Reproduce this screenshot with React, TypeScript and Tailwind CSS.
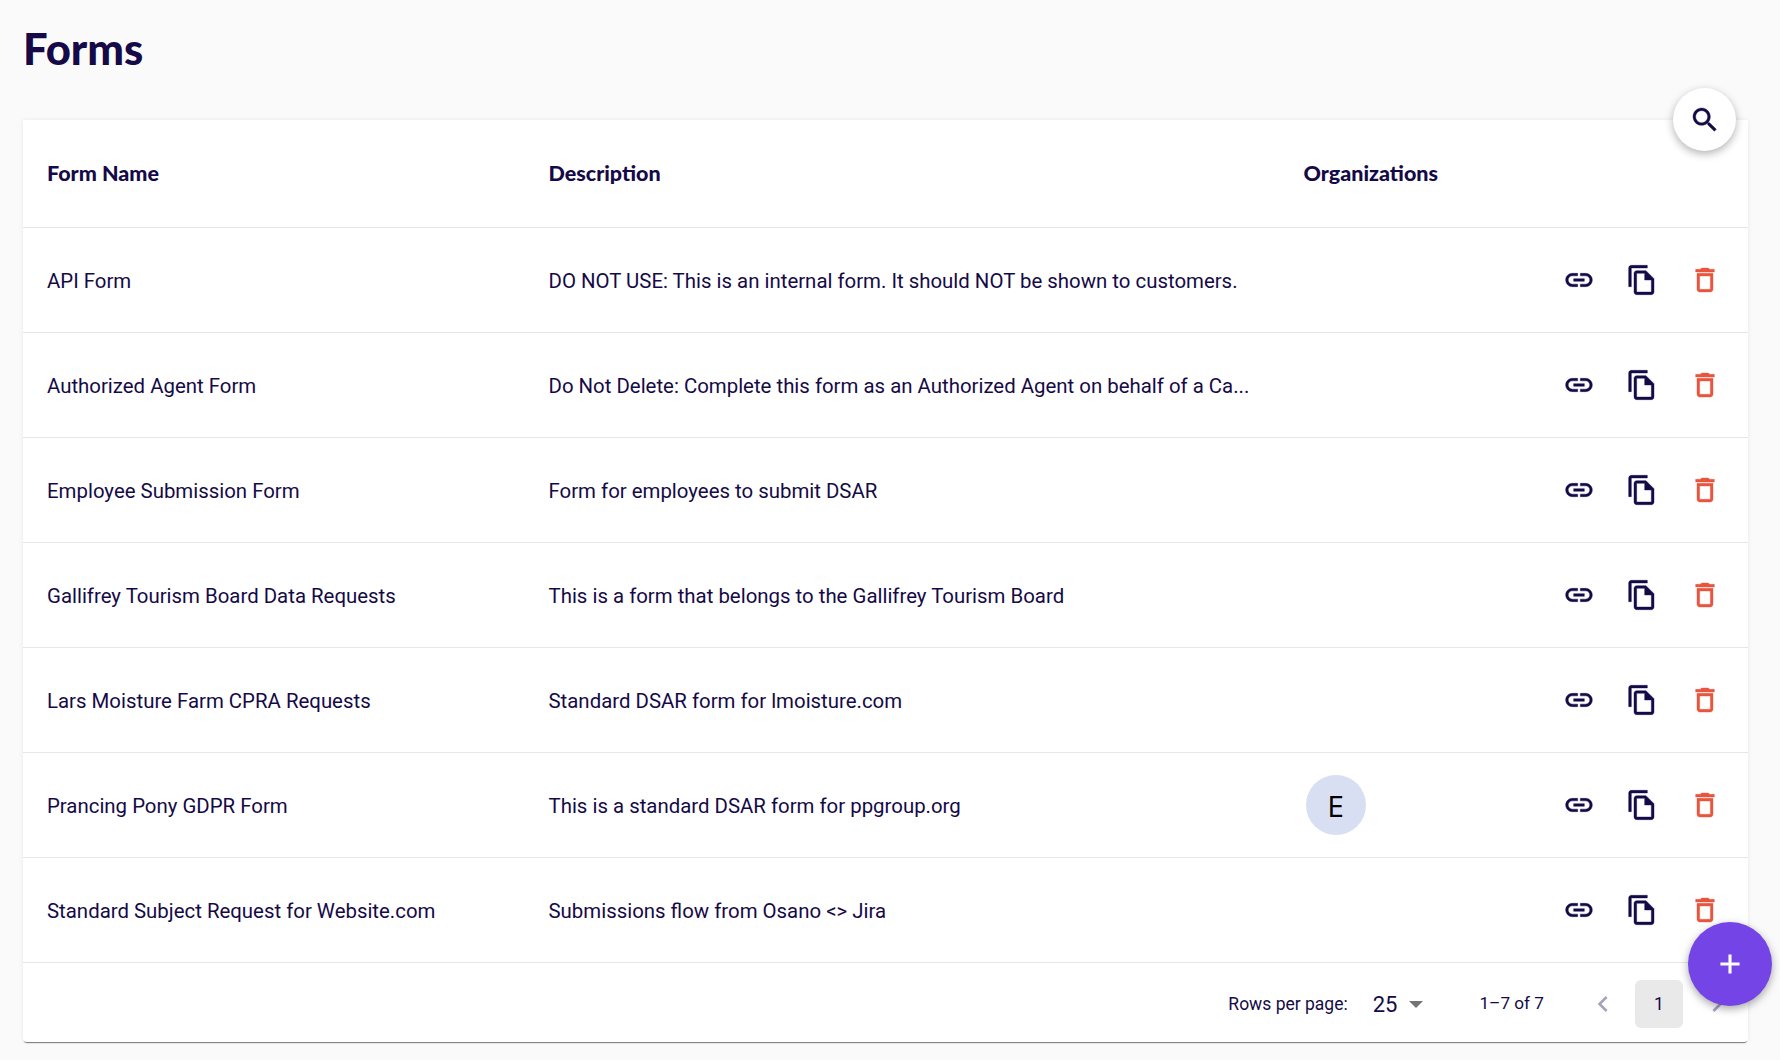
const forms = [
  { name: 'API Form', description: 'DO NOT USE: This is an internal form. It should NOT be shown to customers.' },
  { name: 'Authorized Agent Form', description: 'Do Not Delete: Complete this form as an Authorized Agent on behalf of a Ca...' },
  { name: 'Employee Submission Form', description: 'Form for employees to submit DSAR' },
  { name: 'Gallifrey Tourism Board Data Requests', description: 'This is a form that belongs to the Gallifrey Tourism Board' },
  { name: 'Lars Moisture Farm CPRA Requests', description: 'Standard DSAR form for lmoisture.com' },
  { name: 'Prancing Pony GDPR Form', description: 'This is a standard DSAR form for ppgroup.org', org: 'E' },
  { name: 'Standard Subject Request for Website.com', description: 'Submissions flow from Osano <> Jira' },
]

function Icon({ d, className }: { d: string; className?: string }) {
  return (
    <svg viewBox="0 0 24 24" fill="currentColor" stroke="currentColor" strokeWidth="0.3" className={className}>
      <path d={d} />
    </svg>
  )
}

const LINK = 'M3.9 12c0-1.71 1.39-3.1 3.1-3.1h4V7H7c-2.76 0-5 2.24-5 5s2.24 5 5 5h4v-1.9H7c-1.71 0-3.1-1.39-3.1-3.1zM8 13h8v-2H8v2zm9-6h-4v1.9h4c1.71 0 3.1 1.39 3.1 3.1s-1.39 3.1-3.1 3.1h-4V17h4c2.76 0 5-2.24 5-5s-2.24-5-5-5z'
const COPY = 'M16 1H4c-1.1 0-2 .9-2 2v14h2V3h12V1zm-1 4H8c-1.1 0-1.99.9-1.99 2L6 21c0 1.1.89 2 1.99 2H19c1.1 0 2-.9 2-2V11l-6-6zM8 21V7h6v5h5v9H8z'
const TRASH = 'M6 19c0 1.1.9 2 2 2h8c1.1 0 2-.9 2-2V7H6v12zM8 9h8v10H8V9zm7.5-5l-1-1h-5l-1 1H5v2h14V4h-3.5z'
const SEARCH = 'M15.5 14h-.79l-.28-.27C15.41 12.59 16 11.11 16 9.5 16 5.91 13.09 3 9.5 3S3 5.91 3 9.5 5.91 16 9.5 16c1.61 0 3.09-.59 4.23-1.57l.27.28v.79l5 4.99L20.49 19l-4.99-5zm-6 0C7.01 14 5 11.99 5 9.5S7.01 5 9.5 5 14 7.01 14 9.5 11.99 14 9.5 14z'
const PLUS = 'M19 13h-6v6h-2v-6H5v-2h6V5h2v6h6v2z'

export default function App() {
  return (
    <div className="h-[1060px] bg-[#fafafa] pl-[23px] pr-[32px] font-['Roboto',sans-serif] text-[#150a47] overflow-hidden">
      <h1 className="h-[120px] pt-[17px] font-['Lato',sans-serif] text-[43.6px] leading-[62px] font-black">Forms</h1>

      <div className="relative h-[922px] bg-white rounded-b-[4px] shadow-[0_2px_1px_-1px_rgba(0,0,0,0.5),0_0_4px_rgba(0,0,0,0.08)] flex flex-col">
        <button className="absolute right-[12px] top-[-32px] w-[63px] h-[63px] rounded-full bg-white shadow-[0_3px_8px_rgba(0,0,0,0.3)] flex items-center justify-center">
          <Icon d={SEARCH} className="w-[32px] h-[32px]" />
        </button>

        <div className="flex items-center h-[108px] pb-[1px] border-b border-[#e6e6e6] font-['Lato',sans-serif] text-[21.5px] font-black">
          <div className="w-[525.5px] pl-[24px]">Form Name</div>
          <div className="w-[755px]">Description</div>
          <div>Organizations</div>
        </div>

        {forms.map((form) => (
          <div key={form.name} className="flex items-center h-[105px] border-b border-[#e6e6e6] text-[20.4px]">
            <div className="w-[525.5px] pl-[24px] pt-[2px]">{form.name}</div>
            <div className="w-[755px] pt-[2px]">{form.description}</div>
            <div className="flex-1">
              {form.org && (
                <div className="ml-[2px] w-[60px] h-[60px] rounded-full bg-[#d8dff2] text-black text-[30px] flex items-center justify-center font-['Open_Sans',sans-serif]">
                  {form.org}
                </div>
              )}
            </div>
            <div className="flex items-center gap-[31px] pr-[27px]">
              <Icon d={LINK} className="w-[32px] h-[32px]" />
              <Icon d={COPY} className="w-[32px] h-[32px]" />
              <Icon d={TRASH} className="w-[32px] h-[32px] text-[#e8553f]" />
            </div>
          </div>
        ))}

        <div className="flex-1 flex items-center justify-end text-[17.5px] pr-[15px] pt-[3px]">
          <span>Rows per page:</span>
          <span className="ml-[25px] text-[22px]">25</span>
          <svg viewBox="0 0 12 6" className="ml-[12px] w-[14px] h-[7px] fill-[#757575]"><path d="M0 0h12L6 6z" /></svg>
          <span className="ml-[56px] text-[17.2px]">1–7 of 7</span>
          <svg viewBox="0 0 24 24" className="ml-[43px] w-[32px] h-[32px] fill-[#a6a4bc]"><path d="M15.41 7.41 14 6l-6 6 6 6 1.41-1.41L10.83 12z" /></svg>
          <div className="ml-[16px] w-[48px] h-[48px] rounded-[6px] bg-[#e9e9e9] flex items-center justify-center">1</div>
          <svg viewBox="0 0 24 24" className="ml-[18px] w-[32px] h-[32px] fill-[#a6a4bc]"><path d="M10 6 8.59 7.41 13.17 12l-4.58 4.59L10 18l6-6z" /></svg>
        </div>

        <button className="absolute left-[1665px] top-[802px] w-[84px] h-[84px] rounded-full bg-[#7444e6] text-white shadow-[0_3px_8px_rgba(0,0,0,0.35)] flex items-center justify-center">
          <Icon d={PLUS} className="w-[32px] h-[32px]" />
        </button>
      </div>
    </div>
  )
}
